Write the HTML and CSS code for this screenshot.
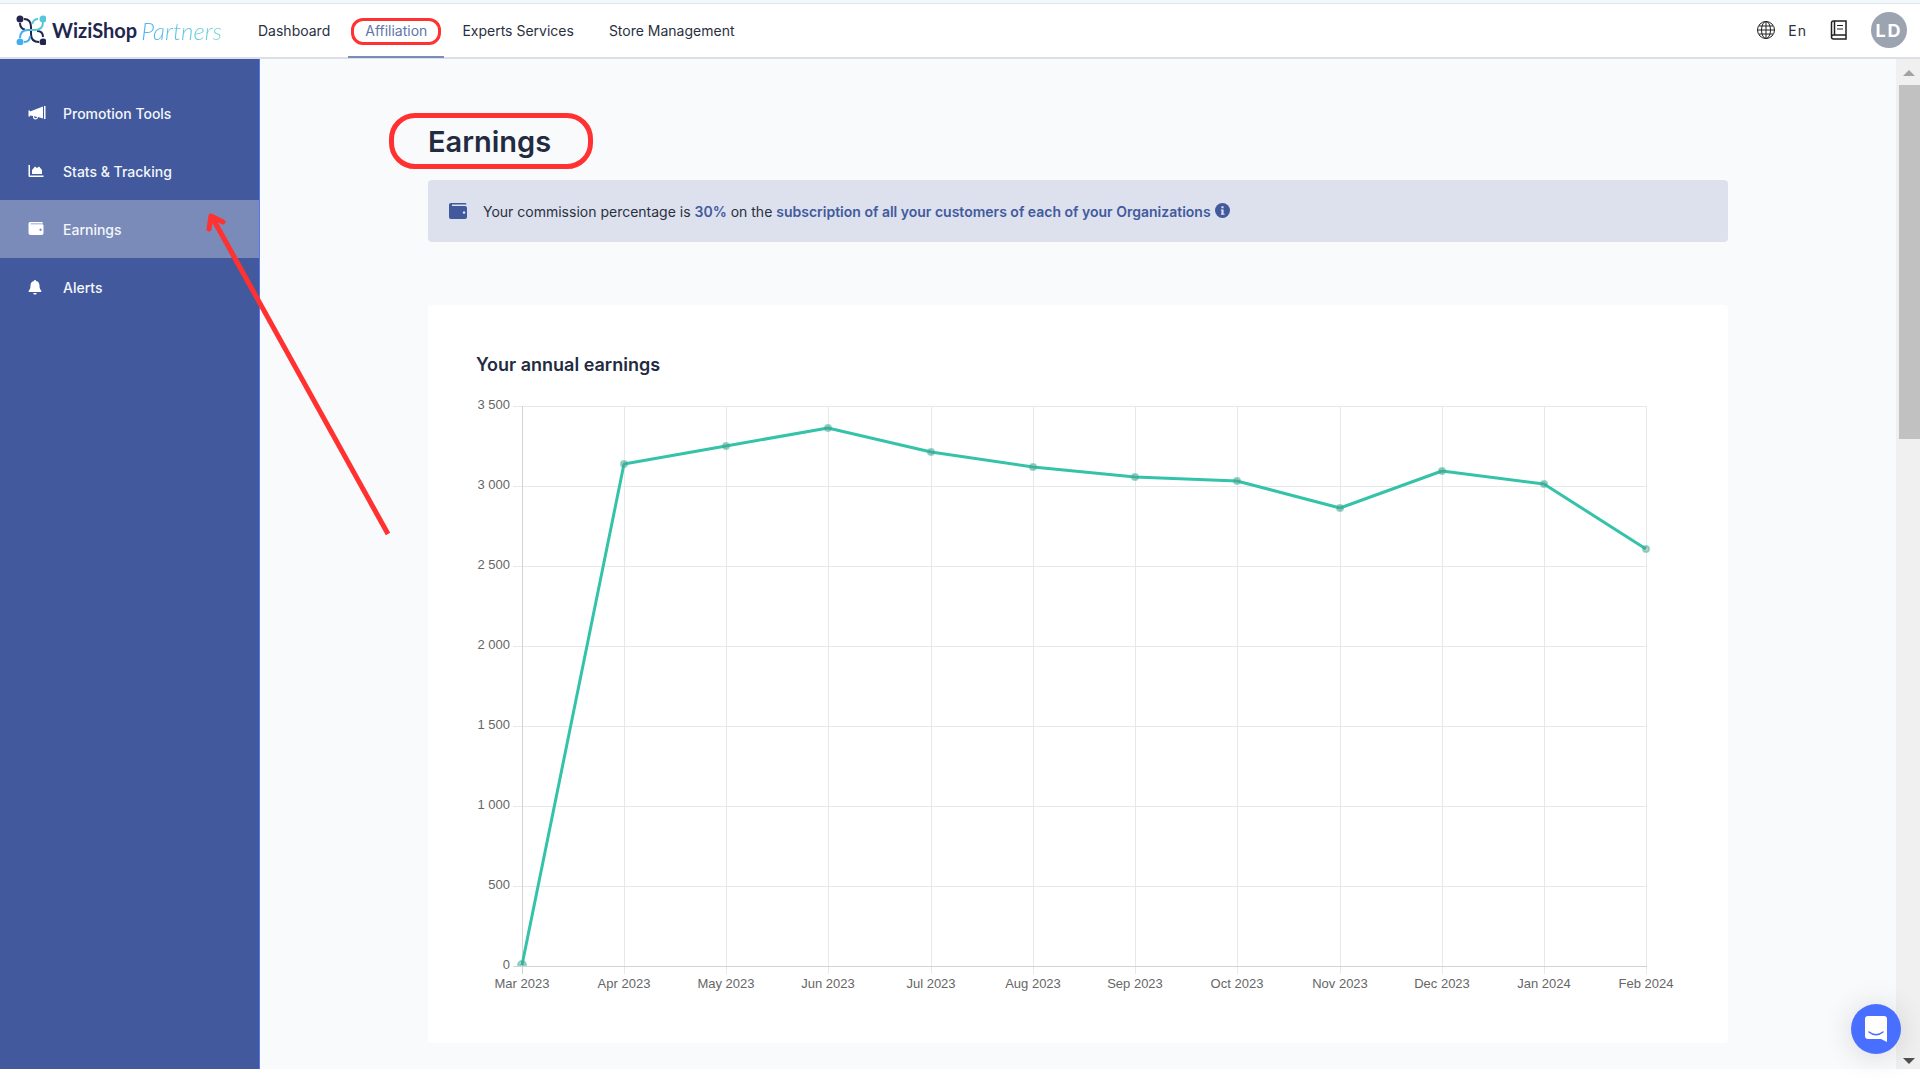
FILE: index.html
```html
<!doctype html>
<html lang="en">

<head>
    <meta charset="UTF-8">
    <meta name="viewport" content="width=device-width, initial-scale=1.0">
    <title>Earnings - WiziShop Partners</title>
    <link rel="stylesheet" href="styles.css">
</head>

<body>
    <!-- Top bar -->
    <header class="topbar">
        <a class="logo" href="#">
            <svg class="logo-mark" viewBox="0 0 30 30" aria-hidden="true">
                <g fill="none" stroke-width="2">
                    <path d="M4 8c0 4 2 6 5 6.500M21 16c4 0 6 2 6 6" stroke="#22264f" />
                    <path d="M8 4c5 0 7 3 7 8v7c0 5 3 8 8 8" stroke="#22264f" />
                    <path d="M22 4c-3 0-5 2-6 5" stroke="#55c8d8" />
                    <path d="M8 27c4 0 6-2 6-6" stroke="#43aeef" />
                    <path d="M4 23c0-5 3-8 8-8h5" stroke="#43aeef" />
                    <path d="M14 15h5c5 0 8-3 8-8" stroke="#55c8d8" />
                </g>
                <circle cx="4" cy="4" r="3.500" fill="#22264f" />
                <circle cx="27" cy="4" r="3.500" fill="#55c8d8" />
                <circle cx="4" cy="27" r="3.500" fill="#43aeef" />
                <circle cx="27" cy="27" r="3.500" fill="#22264f" />
            </svg>
            <span class="logo-name">WiziShop</span>
            <span class="logo-sub">Partners</span>
        </a>
        <nav class="topnav">
            <a href="#">Dashboard</a>
            <a href="#" class="active">Affiliation</a>
            <a href="#">Experts Services</a>
            <a href="#">Store Management</a>
        </nav>
        <div class="tools">
            <button type="button" class="lang">
                <svg width="20" height="20" viewBox="0 0 20 20" fill="none" stroke="#222" aria-hidden="true">
                    <circle cx="10" cy="10" r="8.500" />
                    <ellipse cx="10" cy="10" rx="4.500" ry="8.500" />
                    <path d="M10 1.500v17M1.500 10h17M3 6h14M3 14h14" />
                </svg>
                En
            </button>
            <button type="button" class="docs" aria-label="Documentation">
                <svg width="18" height="20" viewBox="0 0 18 20" fill="none" stroke="#222" stroke-width="1.500" aria-hidden="true">
                    <path d="M16 15V1H3.500C2 1 1.500 2 1.500 3v14c0 1.500 1 2 2 2H16v-4H3.500c-1 0-2 .5-2 2M4.500 1v14" />
                    <path d="M7 5.500h6M7 9h6" stroke-width="1" />
                </svg>
            </button>
            <button type="button" class="avatar">LD</button>
        </div>
    </header>

    <div class="layout">
        <!-- Side menu -->
        <nav class="sidebar">
            <a href="#">
                <svg viewBox="0 0 18 16" aria-hidden="true">
                    <path d="M16 1h1.500v13H16zM15 1.500v12L10 12c0 1.500-1 2.500-2.500 2.500S5 13.500 5 12v-1l-3-.5v1H.5v-6H2v1z" />
                    <path d="M6 11.300c0 2.500 3 2.500 3 .7z" fill="#425a9d" />
                </svg>
                Promotion Tools
            </a>
            <a href="#">
                <svg viewBox="0 0 18 16" aria-hidden="true">
                    <path d="M.5 2H2v10.500h13.500V14H2C1 14 .5 13.500 .5 12.500z" />
                    <path d="M4 11V7l3-3.500 2 1.500 2-1.500L14 7v4z" />
                </svg>
                Stats &amp; Tracking
            </a>
            <a href="#" class="active">
                <svg viewBox="0 0 18 16" aria-hidden="true">
                    <path fill-rule="evenodd" d="M2 1h11.500c.8 0 1.500.5 1.500 1.500H2.500v.8H14c1 0 1.500.7 1.500 1.500V12c0 1-.7 2-2 2H2.500c-1 0-2-.8-2-2V3C.5 2 1 1 2 1zM12.500 7.500a1.200 1.200 0 1 0 .1 0z" />
                </svg>
                Earnings
            </a>
            <a href="#">
                <svg viewBox="0 0 18 16" aria-hidden="true">
                    <path d="M7 1c.6 0 1 .4 1 1 2.300.5 3.500 2.300 3.500 4.500 0 3 .7 4 1.800 5.200.3.500 0 1.300-.6 1.300H1.300c-.6 0-.9-.8-.6-1.300C1.800 10.500 2.500 9.500 2.500 6.500 2.500 4.300 3.700 2.500 6 2c0-.6.400-1 1-1zM5.300 14h3.400c0 2-3.400 2-3.400 0z" />
                </svg>
                Alerts
            </a>
        </nav>

        <main class="content">
            <h1 class="page-title">Earnings</h1>

            <div class="notice">
                <svg class="notice-icon" viewBox="0 0 18 16" aria-hidden="true">
                    <path fill-rule="evenodd" d="M2 0h14c1 0 1.500 .500 1.500 1.500H3V3h13c1.200 0 2 .8 2 2v9c0 1.200-.8 2-2 2H2c-1.200 0-2-.8-2-2V2C0 .8.800 0 2 0zM15 8.200a1.300 1.300 0 1 0 .1 0z" />
                </svg>
                <p>Your commission percentage is <strong>30%</strong> on the <strong>subscription of all your customers of each of your Organizations</strong>
                    <svg class="info-icon" viewBox="0 0 14 14" aria-hidden="true">
                        <circle cx="7" cy="7" r="7" />
                        <path d="M6 3h2v2H6zM5.500 6H8v4h1v1H5.500v-1H6V7h-.500z" fill="#dde1ee" />
                    </svg>
                </p>
            </div>

            <section class="card">
                <h2>Your annual earnings</h2>
                <svg class="chart" viewBox="0 0 1204 600" role="img" aria-label="Your annual earnings">
                    <path class="grid" d="M37 10H1171M37 90H1171M37 170H1171M37 250H1171M37 330H1171M37 410H1171M37 490H1171" />
                    <path class="grid" d="M148 10V578M250 10V578M352 10V578M455 10V578M557 10V578M659 10V578M761 10V578M864 10V578M966 10V578M1068 10V578M1170 10V578" />
                    <path class="axis" d="M46 10V578M37 570H1171" />
                    <g class="labels-y">
                        <text x="34" y="13">3 500</text>
                        <text x="34" y="93">3 000</text>
                        <text x="34" y="173">2 500</text>
                        <text x="34" y="253">2 000</text>
                        <text x="34" y="333">1 500</text>
                        <text x="34" y="413">1 000</text>
                        <text x="34" y="493">500</text>
                        <text x="34" y="573">0</text>
                    </g>
                    <g class="labels-x">
                        <text x="46" y="592">Mar 2023</text>
                        <text x="148" y="592">Apr 2023</text>
                        <text x="250" y="592">May 2023</text>
                        <text x="352" y="592">Jun 2023</text>
                        <text x="455" y="592">Jul 2023</text>
                        <text x="557" y="592">Aug 2023</text>
                        <text x="659" y="592">Sep 2023</text>
                        <text x="761" y="592">Oct 2023</text>
                        <text x="864" y="592">Nov 2023</text>
                        <text x="966" y="592">Dec 2023</text>
                        <text x="1068" y="592">Jan 2024</text>
                        <text x="1170" y="592">Feb 2024</text>
                    </g>
                    <polyline class="line" points="46,569 148,68 250,50 352,32 455,56 557,71 659,81 761,85 864,112 966,75 1068,88 1170,153" />
                    <g class="points">
                        <path d="M42 569a4 4 0 0 1 8 0z" />
                        <circle cx="148" cy="68" r="3" />
                        <circle cx="250" cy="50" r="3" />
                        <circle cx="352" cy="32" r="3" />
                        <circle cx="455" cy="56" r="3" />
                        <circle cx="557" cy="71" r="3" />
                        <circle cx="659" cy="81" r="3" />
                        <circle cx="761" cy="85" r="3" />
                        <circle cx="864" cy="112" r="3" />
                        <circle cx="966" cy="75" r="3" />
                        <circle cx="1068" cy="88" r="3" />
                        <circle cx="1170" cy="153" r="3" />
                    </g>
                </svg>
            </section>
        </main>

        <div class="scrollbar" aria-hidden="true">
            <span class="arrow-up"></span>
            <span class="thumb"></span>
            <span class="arrow-down"></span>
        </div>
    </div>

    <!-- Arrow to the Earnings menu -->
    <svg class="pointer" width="200" height="340" viewBox="0 0 200 340" aria-hidden="true">
        <path d="M188 334L12 17" />
        <path d="M9 29L11 16L23 22" stroke-linecap="round" stroke-linejoin="round" />
    </svg>

    <button type="button" class="chat" aria-label="Open chat">
        <svg width="24" height="26" viewBox="0 0 24 26" aria-hidden="true">
            <path d="M4 0h16c1.800 0 3 1.200 3 3v23l-6-3H4c-1.800 0-3-1.200-3-3V3c0-1.800 1.200-3 3-3z" fill="#fff" />
            <path d="M5 16c4 3.500 10 3.500 14 0" fill="none" stroke="#486fff" stroke-width="1.500" stroke-linecap="round" />
        </svg>
    </button>
</body>

</html>
```
FILE: styles.css
```css
* {
    box-sizing: border-box;
}

body {
    display: flex;
    flex-direction: column;
    height: 100vh;
    margin: 0;
    padding-bottom: 11px;
    overflow: hidden;
    font-family: Inter, "Liberation Sans", sans-serif;
    font-size: 14px;
    color: #2b3040;
    background: #fff;
}

a {
    color: inherit;
    text-decoration: none;
}

button {
    padding: 0;
    border: 0;
    font: inherit;
    color: inherit;
    background: none;
}

/* Top bar */

.topbar {
    display: flex;
    flex: none;
    height: 59px;
    padding: 0 13px 0 16px;
    border-top: 3px solid #f1f9fb;
    border-bottom: 2px solid #dcdfe8;
    box-shadow: inset 0 1px #e0e5ef;
}

.logo {
    display: flex;
    align-items: center;
    width: 225px;
}

.logo-mark {
    width: 30px;
    height: 30px;
    margin-right: 6px;
}

.logo-name,
.logo-sub {
    font-family: Lato, sans-serif;
    font-size: 20px;
    font-weight: 700;
    color: #22264f;
}

.logo-sub {
    margin-left: 4px;
    padding-right: 2px;
    font-size: 24px;
    font-style: italic;
    font-weight: 300;
    color: transparent;
    background: linear-gradient(90deg, #4fb3f0, #6fd6d3);
    background-clip: text;
}

.topnav {
    display: flex;
    gap: 1px;
}

.topnav a {
    position: relative;
    display: flex;
    align-items: center;
    padding: 0 17px;
}

.topnav .active {
    color: #5f74ac;
    box-shadow: inset 0 -1px #7c8cba, 0 1px #7c8cba;
}

/* Red marker around the current section */
.topnav .active::after {
    content: "";
    position: absolute;
    inset: 15px 3px 12px;
    border: 3px solid #ff3131;
    border-radius: 12px;
}

.tools {
    display: flex;
    align-items: center;
    gap: 23px;
    margin-left: auto;
}

.tools svg {
    display: block;
}

.lang {
    display: flex;
    align-items: center;
    gap: 12px;
    letter-spacing: 1px;
}

.avatar {
    width: 36px;
    height: 36px;
    border-radius: 50%;
    font-size: 18px;
    font-weight: 700;
    letter-spacing: 2px;
    color: #fff;
    background: #9ca3b1;
}

/* Page */

.layout {
    display: flex;
    flex: 1;
    min-height: 0;
    background: #f9fafc;
}

.sidebar {
    display: flex;
    flex: none;
    flex-direction: column;
    width: 260px;
    padding-top: 25px;
    border-right: 1px solid #5479ee;
    font-weight: 500;
    color: #f4f6fb;
    background: #425a9d;
}

.sidebar a {
    display: flex;
    align-items: center;
    gap: 17px;
    height: 58px;
    padding-left: 28px;
}

.sidebar .active {
    background: #7a8bb9;
}

.sidebar svg {
    width: 18px;
    height: 16px;
    fill: #fff;
}

.content {
    flex: 1;
    min-width: 0;
    padding: 61px 168px 0;
    overflow: hidden;
}

.page-title {
    position: relative;
    width: max-content;
    margin: 0 0 16px;
    font-size: 29px;
    font-weight: 600;
    line-height: 44px;
    color: #222b3f;
}

.page-title::after {
    content: "";
    position: absolute;
    inset: -7px -42px -5px -39px;
    border: 5px solid #ff3131;
    border-radius: 26px;
}

.notice {
    display: flex;
    align-items: center;
    gap: 16px;
    height: 62px;
    margin-bottom: 63px;
    padding: 0 21px;
    border-radius: 4px;
    background: #dde1ee;
}

.notice p {
    margin: 0;
}

.notice strong {
    font-weight: 600;
    color: #425a9d;
}

.notice svg {
    fill: #425a9d;
}

.notice-icon {
    width: 18px;
    height: 16px;
}

.info-icon {
    width: 15px;
    height: 15px;
    vertical-align: -1px;
}

.card {
    padding: 48px 48px 47px;
    border-radius: 4px;
    background: #fff;
}

.card h2 {
    margin: 0 0 19px;
    font-size: 18px;
    font-weight: 600;
    line-height: 24px;
    color: #222b3f;
}

/* Chart */

.chart {
    display: block;
    width: 100%;
    font-family: "Liberation Sans", Arial, sans-serif;
    font-size: 13px;
    fill: #666;
}

.grid,
.axis {
    fill: none;
    stroke: #e8e8e8;
    stroke-width: 1;
    shape-rendering: crispEdges;
}

.axis {
    stroke: #d2d2d2;
}

.labels-y {
    text-anchor: end;
}

.labels-x {
    text-anchor: middle;
}

.line {
    fill: none;
    stroke: #34c3a9;
    stroke-width: 3;
    stroke-linejoin: round;
}

.points {
    fill: rgba(110, 120, 120, 0.3);
    stroke: rgba(52, 180, 155, 0.5);
    stroke-width: 2;
}

/* Scrollbar */

.scrollbar {
    display: flex;
    flex: none;
    flex-direction: column;
    align-items: flex-end;
    width: 24px;
    padding: 11px 0 5px;
    background: #f0f0f0;
}

.arrow-up,
.arrow-down {
    margin-right: 5px;
    border: 6px solid transparent;
    border-top-width: 0;
    border-bottom-color: #a3a3a3;
}

.arrow-down {
    margin-top: auto;
    border-top: 6px solid #505050;
    border-bottom-width: 0;
}

.thumb {
    width: 21px;
    height: 354px;
    margin-top: 9px;
    background: #c1c1c1;
}

/* Elements above the page */

.pointer {
    position: absolute;
    top: 200px;
    left: 200px;
    fill: none;
    stroke: #ff3131;
    stroke-width: 5;
    pointer-events: none;
}

.chat {
    position: fixed;
    right: 19px;
    bottom: 26px;
    display: flex;
    align-items: center;
    justify-content: center;
    width: 50px;
    height: 50px;
    border-radius: 50%;
    background: #486fff;
    box-shadow: 0 2px 30px rgba(0, 0, 0, 0.14);
}
```
